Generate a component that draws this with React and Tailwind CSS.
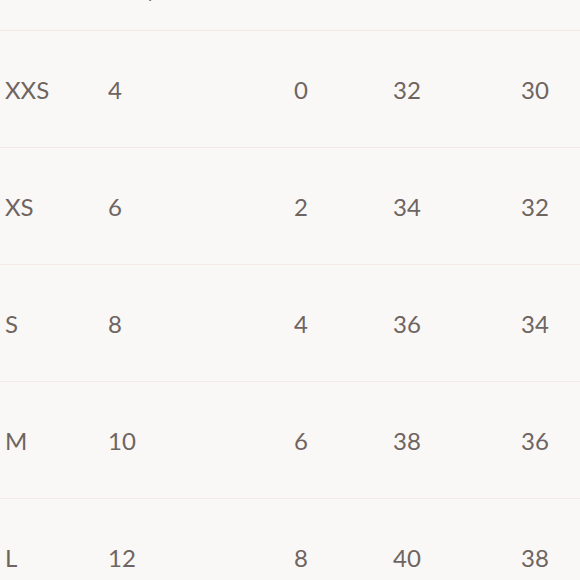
import React from "react";

const rows = [
  ["XXS", "4", "0", "32", "30"],
  ["XS", "6", "2", "34", "32"],
  ["S", "8", "4", "36", "34"],
  ["M", "10", "6", "38", "36"],
  ["L", "12", "8", "40", "38"],
  ["XL", "14", "10", "42", "40"],
];

const cols = "grid grid-cols-[103px_186px_99px_128px_1fr] pl-[5px]";

export default function App() {
  return (
    <div
      className="w-[580px] h-[580px] overflow-hidden bg-[#faf8f7] text-[#6e6561]"
      style={{ fontFamily: "Lato, 'Open Sans', sans-serif" }}
    >
      {/* header row, mostly scrolled above the viewport */}
      <div className={`${cols} h-[31px] border-b border-[#f3e9e5] text-[24px] leading-none tracking-wide`}>
        <div className="-mt-[21px]">SIZE</div>
        <div className="-mt-[21px] -ml-[8px]">AUS/UK</div>
        <div className="-mt-[21px] -ml-[24px]">USA</div>
        <div className="-mt-[21px] -ml-[38px]">EURO</div>
        <div className="-mt-[21px] -ml-[49px]">JAPAN</div>
      </div>

      {rows.map((r) => (
        <div
          key={r[0]}
          className={`${cols} h-[117px] items-center pt-[2px] border-b border-[#f3e9e5] text-[24px] leading-none`}
        >
          {r.map((c, i) => (
            <div key={i}>{c}</div>
          ))}
        </div>
      ))}
    </div>
  );
}
